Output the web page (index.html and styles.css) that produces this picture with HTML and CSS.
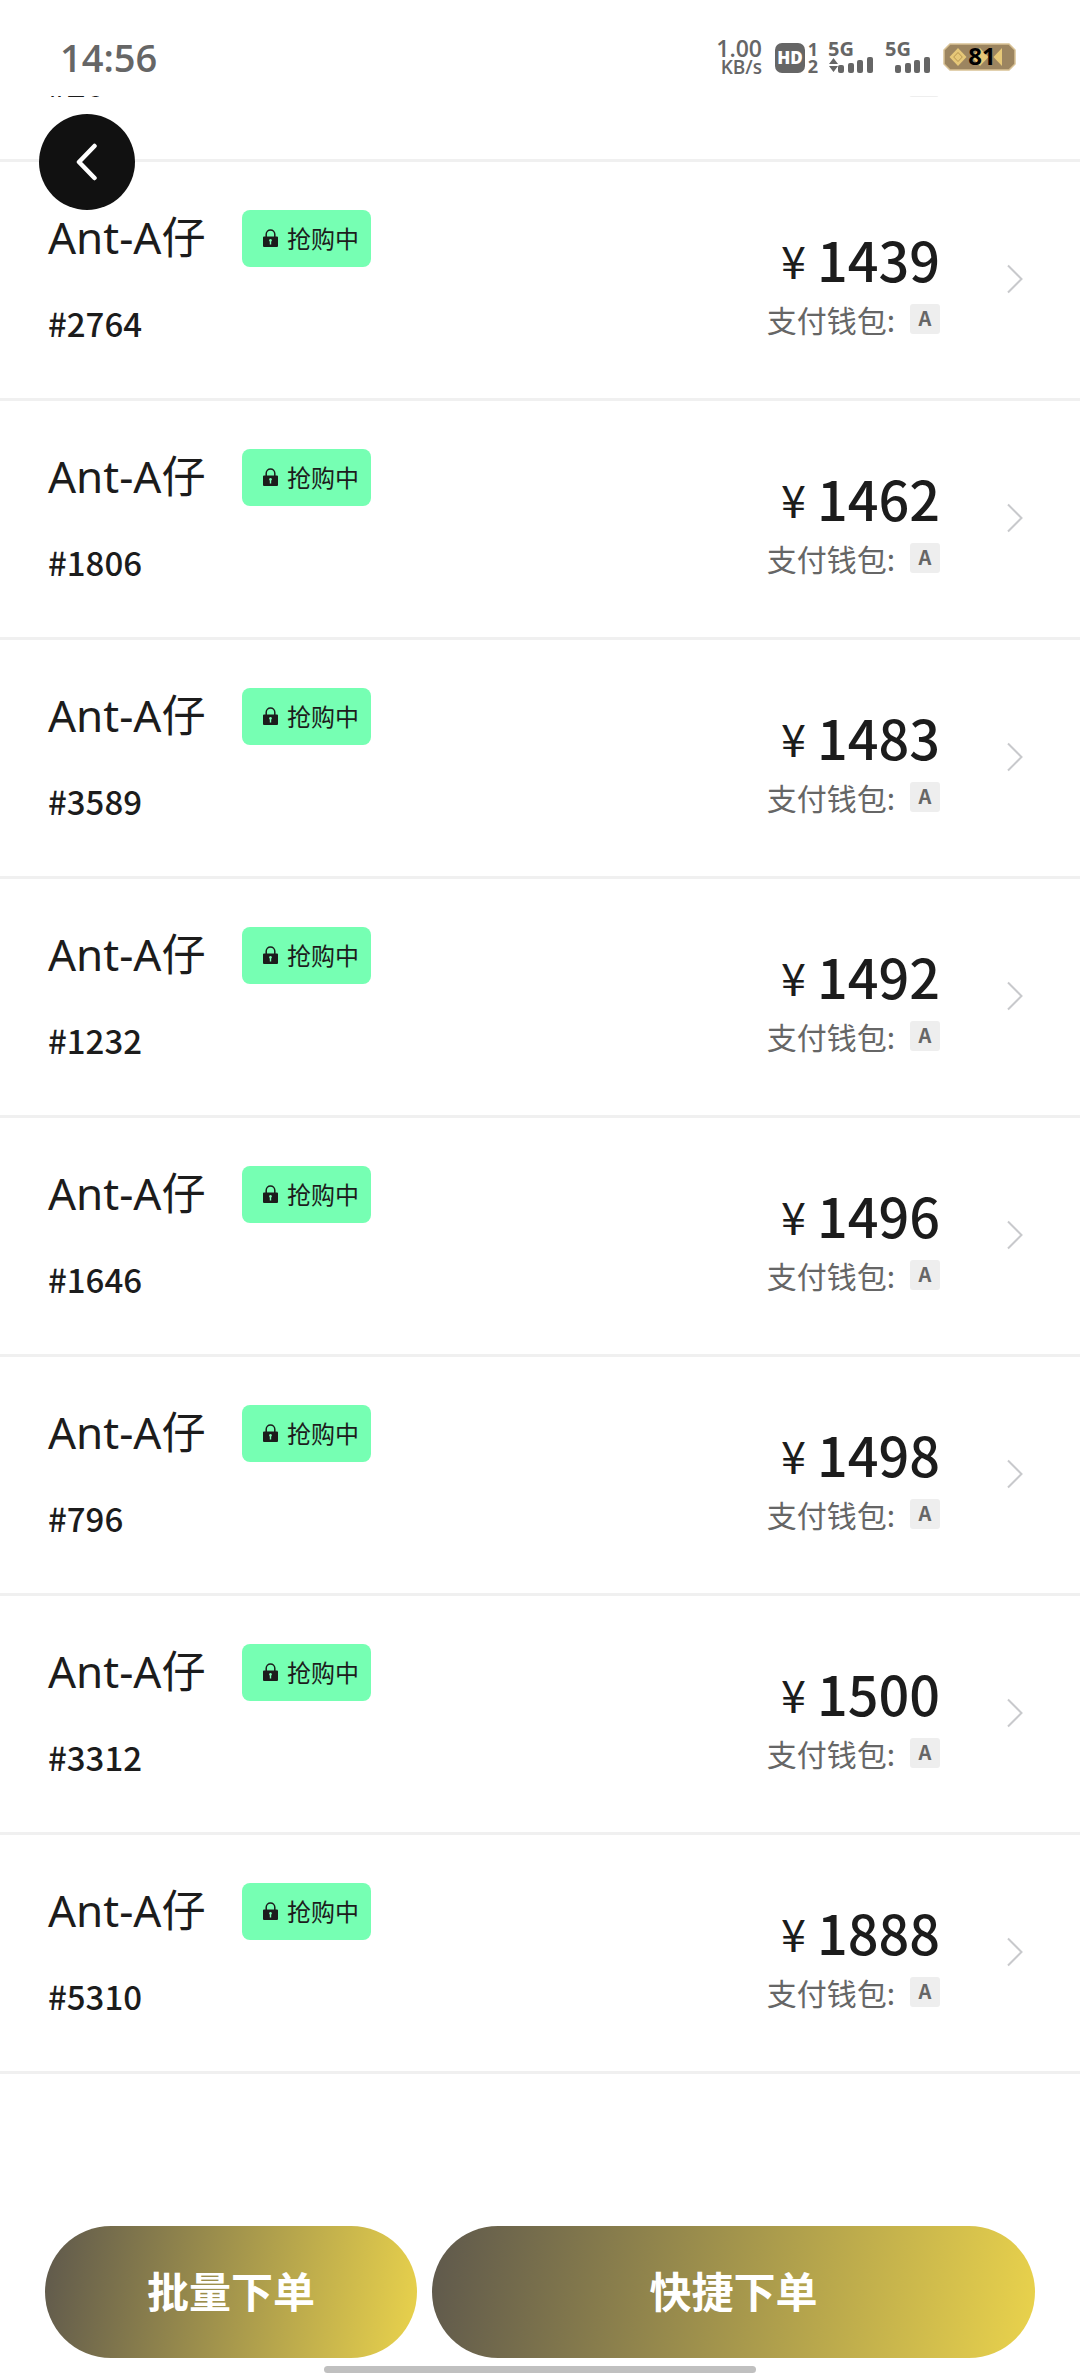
FILE: index.html
```html
<!DOCTYPE html>
<html lang="zh-CN">
<head>
    <meta charset="utf-8">
    <meta name="viewport" content="width=device-width, initial-scale=1">
    <title>Ant-A仔</title>
    <link rel="stylesheet" href="styles.css">
</head>
<body>
    <svg class="symbols" aria-hidden="true">
        <symbol id="lock" viewBox="0 0 15 18">
            <path d="M3.2 8V5.2a4.3 4.3 0 0 1 8.6 0V8" fill="none" stroke="#1c1c1c" stroke-width="1.5"/>
            <path fill-rule="evenodd" fill="#1c1c1c" d="M1 7.5h13a1 1 0 0 1 1 1V17a1 1 0 0 1-1 1H1a1 1 0 0 1-1-1V8.500a1 1 0 0 1 1-1zM7.500 10a1.400 1.400 0 0 0-.7 2.600V15.500h1.400v-2.900A1.400 1.400 0 0 0 7.500 10z"/>
        </symbol>
        <symbol id="arrow" viewBox="0 0 18 30">
            <path d="M2 1.500l13.500 13.500L2 28.500" fill="none" stroke="#c8c9cc" stroke-width="2"/>
        </symbol>
        <symbol id="bars" viewBox="0 0 36 16">
            <g fill="#666">
                <rect x="0" y="8" width="6" height="8" rx="2"/>
                <rect x="10" y="6" width="6" height="10" rx="2"/>
                <rect x="19" y="3" width="6" height="13" rx="2"/>
                <rect x="29" y="0" width="6" height="16" rx="2"/>
            </g>
        </symbol>
    </svg>

    <header class="status-bar">
        <time class="clock">14:56</time>
        <div class="status-icons">
            <div class="net-speed"><span class="rate">1.00</span><span class="unit">KB/s</span></div>
            <div class="hd">HD</div>
            <div class="sims"><span>1</span><span>2</span></div>
            <div class="signal">
                <span>5G</span>
                <div class="bars">
                    <svg width="9" height="16" viewBox="0 0 9 16"><path d="M0 7l4.500-6L9 7zM0 9h9l-4.500 6z" fill="#666"/></svg>
                    <svg width="36" height="16"><use href="#bars"/></svg>
                </div>
            </div>
            <div class="signal">
                <span>5G</span>
                <div class="bars">
                    <svg width="36" height="16"><use href="#bars"/></svg>
                </div>
            </div>
            <svg class="battery" width="73" height="28" viewBox="0 0 73 28">
                <path d="M7 1h59l6 6v14l-6 6H7l-6-6V7z" fill="#9c8560" stroke="#d9c295" stroke-width="1.500"/>
                <path d="M15 5l8.500 9-8.500 9-8.500-9z" fill="#e6c878"/>
                <path d="M15 9.500l4.300 4.500-4.300 4.500-4.300-4.500z" fill="none" stroke="#b8964f"/>
                <path d="M37 5l8.500 9-8.500 9-8.500-9z" fill="#e6c878"/>
                <path d="M59 5v18l-8.500-9z" fill="#e6c878"/>
                <text x="39" y="22" font-size="24" font-weight="700" text-anchor="middle" fill="#000">81</text>
            </svg>
        </div>
    </header>

    <button type="button" class="back" aria-label="返回">
        <svg width="22" height="38" viewBox="0 0 22 38">
            <path d="M18.500 3L3 19l15.500 16" fill="none" stroke="#fff" stroke-width="4.500" stroke-linecap="round" stroke-linejoin="round"/>
        </svg>
    </button>

    <main class="list">
        <!-- row scrolled under the status bar -->
        <div class="item item-cut">
            <span class="number">#26</span>
            <span class="wallet-type"></span>
        </div>
        <a class="item" href="#2764">
            <div class="info">
                <div class="title"><span class="name">Ant-A仔</span><span class="badge"><svg class="lock"><use href="#lock"/></svg>抢购中</span></div>
                <div class="number">#2764</div>
            </div>
            <div class="pay">
                <div class="price"><span class="yen">¥</span>1439</div>
                <div class="wallet">支付钱包:<span class="wallet-type">A</span></div>
            </div>
            <svg class="arrow"><use href="#arrow"/></svg>
        </a>
        <a class="item" href="#1806">
            <div class="info">
                <div class="title"><span class="name">Ant-A仔</span><span class="badge"><svg class="lock"><use href="#lock"/></svg>抢购中</span></div>
                <div class="number">#1806</div>
            </div>
            <div class="pay">
                <div class="price"><span class="yen">¥</span>1462</div>
                <div class="wallet">支付钱包:<span class="wallet-type">A</span></div>
            </div>
            <svg class="arrow"><use href="#arrow"/></svg>
        </a>
        <a class="item" href="#3589">
            <div class="info">
                <div class="title"><span class="name">Ant-A仔</span><span class="badge"><svg class="lock"><use href="#lock"/></svg>抢购中</span></div>
                <div class="number">#3589</div>
            </div>
            <div class="pay">
                <div class="price"><span class="yen">¥</span>1483</div>
                <div class="wallet">支付钱包:<span class="wallet-type">A</span></div>
            </div>
            <svg class="arrow"><use href="#arrow"/></svg>
        </a>
        <a class="item" href="#1232">
            <div class="info">
                <div class="title"><span class="name">Ant-A仔</span><span class="badge"><svg class="lock"><use href="#lock"/></svg>抢购中</span></div>
                <div class="number">#1232</div>
            </div>
            <div class="pay">
                <div class="price"><span class="yen">¥</span>1492</div>
                <div class="wallet">支付钱包:<span class="wallet-type">A</span></div>
            </div>
            <svg class="arrow"><use href="#arrow"/></svg>
        </a>
        <a class="item" href="#1646">
            <div class="info">
                <div class="title"><span class="name">Ant-A仔</span><span class="badge"><svg class="lock"><use href="#lock"/></svg>抢购中</span></div>
                <div class="number">#1646</div>
            </div>
            <div class="pay">
                <div class="price"><span class="yen">¥</span>1496</div>
                <div class="wallet">支付钱包:<span class="wallet-type">A</span></div>
            </div>
            <svg class="arrow"><use href="#arrow"/></svg>
        </a>
        <a class="item" href="#796">
            <div class="info">
                <div class="title"><span class="name">Ant-A仔</span><span class="badge"><svg class="lock"><use href="#lock"/></svg>抢购中</span></div>
                <div class="number">#796</div>
            </div>
            <div class="pay">
                <div class="price"><span class="yen">¥</span>1498</div>
                <div class="wallet">支付钱包:<span class="wallet-type">A</span></div>
            </div>
            <svg class="arrow"><use href="#arrow"/></svg>
        </a>
        <a class="item" href="#3312">
            <div class="info">
                <div class="title"><span class="name">Ant-A仔</span><span class="badge"><svg class="lock"><use href="#lock"/></svg>抢购中</span></div>
                <div class="number">#3312</div>
            </div>
            <div class="pay">
                <div class="price"><span class="yen">¥</span>1500</div>
                <div class="wallet">支付钱包:<span class="wallet-type">A</span></div>
            </div>
            <svg class="arrow"><use href="#arrow"/></svg>
        </a>
        <a class="item" href="#5310">
            <div class="info">
                <div class="title"><span class="name">Ant-A仔</span><span class="badge"><svg class="lock"><use href="#lock"/></svg>抢购中</span></div>
                <div class="number">#5310</div>
            </div>
            <div class="pay">
                <div class="price"><span class="yen">¥</span>1888</div>
                <div class="wallet">支付钱包:<span class="wallet-type">A</span></div>
            </div>
            <svg class="arrow"><use href="#arrow"/></svg>
        </a>
    </main>

    <footer class="footer">
        <div class="actions">
            <button type="button" class="order batch">批量下单</button>
            <button type="button" class="order quick">快捷下单</button>
        </div>
        <div class="home-bar"></div>
    </footer>
</body>
</html>
```
FILE: styles.css
```css
* { box-sizing: border-box; }
body { margin: 0; min-height: 100vh; display: flex; flex-direction: column; background: #fff; color: #1c1c1c; font-family: "Noto Sans CJK SC", sans-serif; }
a { color: inherit; text-decoration: none; }
button { border: none; padding: 0; font-family: inherit; cursor: pointer; }
svg { flex: none; }
.symbols { position: absolute; width: 0; height: 0; }

/* status bar */
.status-bar { display: flex; justify-content: space-between; align-items: flex-start; height: 96px; padding: 35px 64px 0 60px; color: #666; font-family: "Open Sans", sans-serif; }
.clock { font-size: 38px; line-height: 44px; font-weight: 600; }
.status-icons { display: flex; align-items: flex-start; padding-top: 8px; font-weight: 700; }
.net-speed { display: flex; flex-direction: column; align-items: flex-end; margin: -5px 13px 0 0; font-weight: 600; }
.rate { font-size: 23px; line-height: 20px; }
.unit { font-size: 19px; line-height: 18px; }
.hd { width: 30px; height: 30px; border-radius: 7px; background: #666; color: #fff; font-size: 17px; line-height: 30px; font-weight: 800; text-align: center; }
.sims { display: flex; flex-direction: column; align-items: center; width: 12px; margin: -2px 9px 0 2px; font-size: 18px; line-height: 17px; }
.signal { width: 46px; margin: -2px 11px 0 0; font-size: 20px; line-height: 16px; }
.signal span { display: block; }
.bars { display: flex; justify-content: flex-end; }
.signal + .battery { margin-left: 1px; }

.back { position: absolute; top: 114px; left: 39px; width: 96px; height: 96px; border-radius: 50%; background: #111; display: flex; align-items: center; justify-content: center; }

/* list */
.list { flex: 1; }
.item { display: flex; align-items: center; justify-content: space-between; padding: 48px 56px 51px 48px; border-bottom: 3px solid #f0f0f0; }
.item-cut { height: 66px; padding: 0 141px 62px 48px; align-items: flex-end; overflow: hidden; }
.item-cut .number { margin: 0 0 -10px; }
.info { flex: 1; }
.title { display: flex; align-items: flex-start; }
.name { width: 194px; font-family: "Noto Sans", "Noto Sans CJK SC", sans-serif; font-size: 44px; line-height: 54px; white-space: nowrap; }
.badge { display: flex; align-items: center; height: 57px; padding: 0 12px 2px 21px; border-radius: 8px; background: #76ffb3; font-size: 24px; }
.lock { width: 15px; height: 18px; margin-right: 9px; }
.number { margin-top: 32px; font-size: 33px; line-height: 48px; font-weight: 500; }
.pay { text-align: right; padding-top: 6px; margin-right: 66px; }
.price { font-size: 54px; line-height: 60px; font-weight: 500; }
.yen { margin-right: 11px; font-size: 45px; line-height: 1; font-weight: 400; vertical-align: 3px; }
.wallet { display: flex; align-items: center; justify-content: flex-end; margin-top: 15px; color: #666; font-size: 30px; line-height: 28px; }
.wallet-type { width: 30px; height: 30px; margin-left: 15px; border-radius: 3px; background: #eee; font-size: 20px; text-align: center; font-weight: 700; }
.arrow { width: 18px; height: 30px; }

/* bottom actions */
.footer { padding: 0 45px 3px; }
.actions { display: flex; gap: 15px; margin-bottom: 8px; }
.order { height: 132px; padding-bottom: 6px; border-radius: 66px; background: linear-gradient(100deg, #5e584c, #ead34c); color: #fff; font-size: 42px; font-weight: 700; }
.batch { flex: 372; }
.quick { flex: 603; }
.home-bar { width: 432px; max-width: 50%; height: 7px; margin: 0 auto; border-radius: 4px; background: #c0c0c0; }
```
